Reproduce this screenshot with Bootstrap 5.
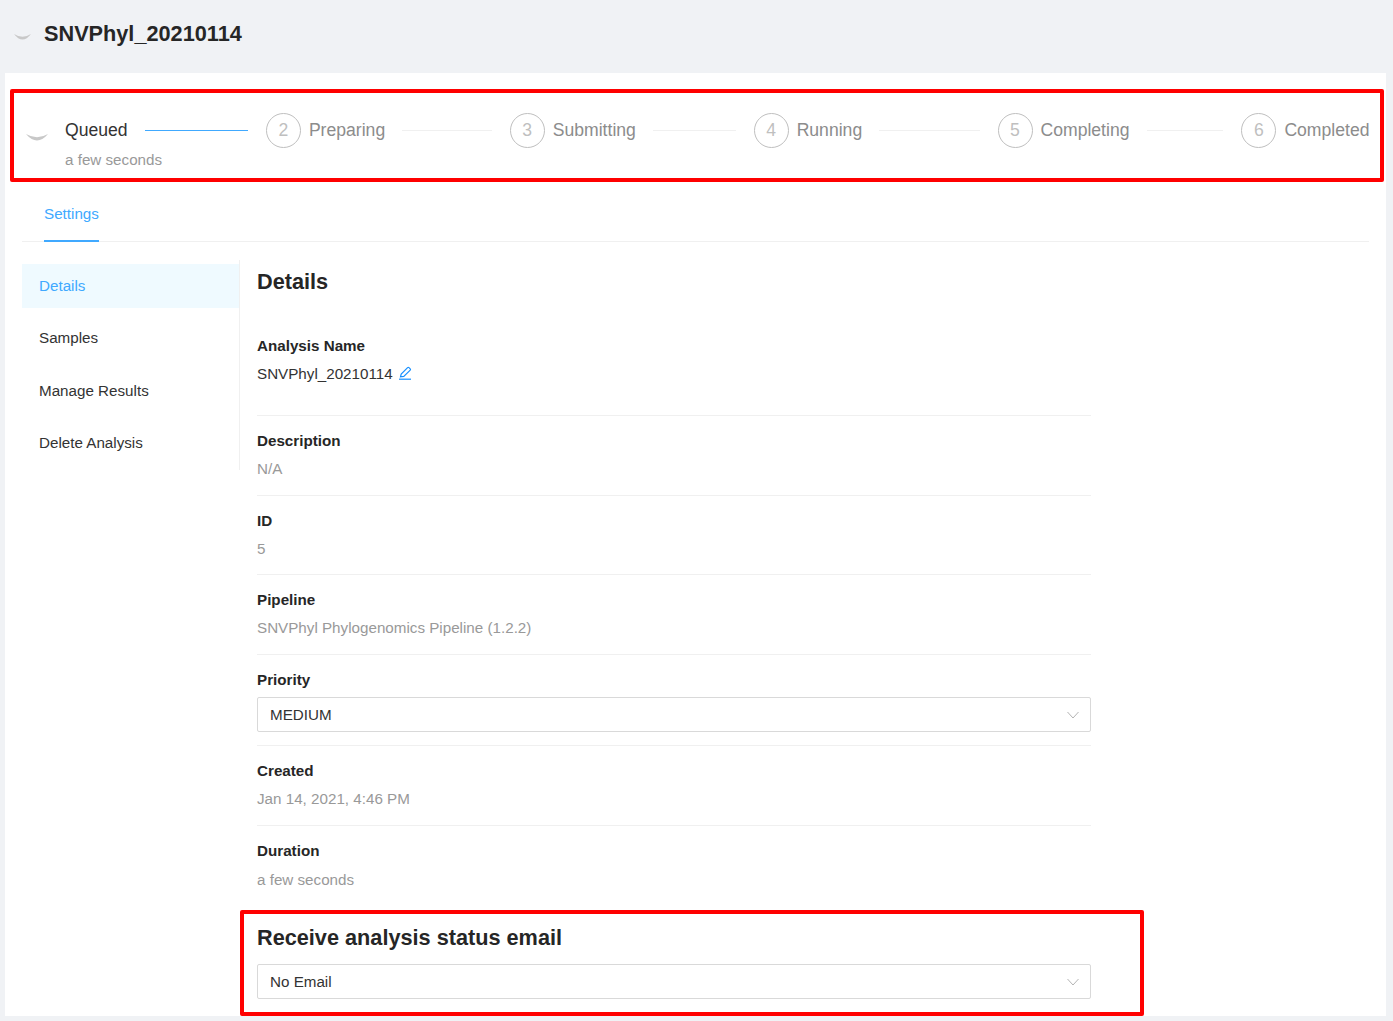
<!DOCTYPE html>
<html lang="en">
<head>
    <meta charset="UTF-8">
    <title>SNVPhyl_20210114</title>
    <link rel="stylesheet" href="https://cdn.jsdelivr.net/npm/bootstrap@5.3.0/dist/css/bootstrap.min.css">
    <style>
        body {
            background: #f0f2f5;
            font-family: "Liberation Sans", Arial, sans-serif;
            font-size: 15.2px;
            color: #262626;
            overflow: hidden;
        }

        .page-head {
            height: 73px;
            padding: 0 0 6px 14px;
        }

        .page-head h1 {
            font-size: 21.7px;
            font-weight: 700;
            margin: 0 0 0 13px;
            line-height: 26px;
        }

        .panel {
            background: #fff;
            margin: 0 7px 5px 5px;
            height: 943px;
            padding-top: 16px;
        }

        .red-box {
            border: 4px solid #f00;
            border-radius: 2px;
        }

        .steps-box {
            margin: 0 2px 0 5px;
            height: 93px;
            padding: 20px 11px 0 8px;
        }

        .step-item {
            flex: 1 1 0;
        }

        .step-item:last-child {
            flex: none;
            width: 127.6px;
        }

        .step-num {
            width: 35px;
            height: 35px;
            border: 1px solid #bfbfbf;
            border-radius: 50%;
            color: #bfbfbf;
            font-size: 17.6px;
            margin-right: 8px;
            flex: none;
        }

        .step-spin {
            width: 35px;
            height: 35px;
            margin-right: 8px;
            padding-left: 4px;
            flex: none;
        }

        .step-title {
            font-size: 17.6px;
            line-height: 35px;
            color: #8c8c8c;
            white-space: nowrap;
        }

        .step-title.now {
            color: #333;
        }

        .step-line {
            height: 1px;
            background: #f0f0f0;
            margin: 0 18px 0 17px;
        }

        .step-line.now {
            background: #40a9ff;
        }

        .step-desc {
            color: #999;
            line-height: 22px;
            margin-top: 1px;
        }

        .tab-bar {
            margin: 0 17px;
            height: 60px;
            border-bottom: 1px solid #f0f0f0;
            padding-left: 22px;
        }

        .tab-on {
            color: #40a9ff;
            border-bottom: 2px solid #40a9ff;
            height: 60px;
            line-height: 63px;
            margin-bottom: -1px;
        }

        .body-wrap {
            margin-top: 18px;
        }

        .side-menu {
            width: 218px;
            height: 210px;
            margin-left: 17px;
            border-right: 1px solid #f0f0f0;
            padding-top: 4px;
        }

        .side-item {
            height: 44px;
            line-height: 44px;
            padding-left: 17px;
            margin-bottom: 8.3px;
            color: #333;
            text-decoration: none;
        }

        .side-item.on {
            background: #effaff;
            color: #40a9ff;
        }

        .main-col h2 {
            font-size: 21.7px;
            font-weight: 700;
            line-height: 26px;
            margin: 9px 0 0;
        }

        .detail-list {
            width: 834px;
            margin-left: 17px;
        }

        .detail-row {
            padding: 14px 0 14.67px;
            border-bottom: 1px solid #f0f0f0;
        }

        .detail-row:last-child {
            border-bottom: 0;
        }

        .detail-row.first {
            padding: 40px 0 30.1px;
        }

        .detail-row.tight {
            padding-bottom: 13px;
        }

        .detail-label {
            font-weight: 700;
            line-height: 22px;
            margin-bottom: 6px;
        }

        .detail-row:last-child .detail-label {
            margin-bottom: 7px;
        }

        .detail-value {
            line-height: 22px;
            color: #999;
        }

        .detail-value.dark {
            color: #333;
        }

        .edit-icon {
            margin-left: 5px;
            vertical-align: -1px;
        }

        .form-select.ant-select {
            height: 35px;
            font-size: 15.2px;
            color: #333;
            border: 1px solid #d9d9d9;
            border-radius: 2px;
            padding: 1px 30px 0 12px;
            background-image: url("data:image/svg+xml,%3csvg xmlns='http://www.w3.org/2000/svg' viewBox='0 0 12 8'%3e%3cpath fill='none' stroke='%23b4b4b4' stroke-width='1' d='M.5 1 6 7 11.5 1'/%3e%3c/svg%3e");
            background-size: 12px 8px;
            background-position: right 11px center;
        }

        .mail-box {
            width: 904px;
            height: 106px;
            margin-top: 5px;
            padding: 0 49px 0 13px;
        }

        .mail-box h2 {
            margin: 11px 0 13px;
        }
    </style>
</head>
<body>
    <div class="page-head d-flex align-items-center">
        <svg width="17" height="8" viewBox="0 0 17 8" class="mt-2 flex-shrink-0"><path d="M0 0Q8.500 11 17 0Q8.500 5.500 0 0Z" fill="#c8c8c8"/></svg>
        <h1>SNVPhyl_20210114</h1>
    </div>

    <div class="panel">
        <div class="red-box steps-box d-flex">
            <div class="step-item d-flex">
                <div class="step-spin d-flex">
                    <svg width="22" height="35" viewBox="0 0 22 35"><path d="M0 21Q11 34 22 21Q11 27.500 0 21Z" fill="#c8c8c8"/></svg>
                </div>
                <div class="flex-grow-1">
                    <div class="d-flex align-items-center">
                        <span class="step-title now">Queued</span>
                        <div class="step-line now flex-grow-1"></div>
                    </div>
                    <div class="step-desc">a few seconds</div>
                </div>
            </div>
            <div class="step-item d-flex">
                <div class="step-num d-flex align-items-center justify-content-center">2</div>
                <div class="flex-grow-1 d-flex align-items-center align-self-start">
                    <span class="step-title">Preparing</span>
                    <div class="step-line flex-grow-1"></div>
                </div>
            </div>
            <div class="step-item d-flex">
                <div class="step-num d-flex align-items-center justify-content-center">3</div>
                <div class="flex-grow-1 d-flex align-items-center align-self-start">
                    <span class="step-title">Submitting</span>
                    <div class="step-line flex-grow-1"></div>
                </div>
            </div>
            <div class="step-item d-flex">
                <div class="step-num d-flex align-items-center justify-content-center">4</div>
                <div class="flex-grow-1 d-flex align-items-center align-self-start">
                    <span class="step-title">Running</span>
                    <div class="step-line flex-grow-1"></div>
                </div>
            </div>
            <div class="step-item d-flex">
                <div class="step-num d-flex align-items-center justify-content-center">5</div>
                <div class="flex-grow-1 d-flex align-items-center align-self-start">
                    <span class="step-title">Completing</span>
                    <div class="step-line flex-grow-1"></div>
                </div>
            </div>
            <div class="step-item d-flex">
                <div class="step-num d-flex align-items-center justify-content-center">6</div>
                <div class="d-flex align-items-center align-self-start">
                    <span class="step-title">Completed</span>
                </div>
            </div>
        </div>

        <div class="tab-bar d-flex">
            <div class="tab-on">Settings</div>
        </div>

        <div class="body-wrap d-flex">
            <div class="side-menu d-flex flex-column flex-shrink-0">
                <a class="side-item on" href="#">Details</a>
                <a class="side-item" href="#">Samples</a>
                <a class="side-item" href="#">Manage Results</a>
                <a class="side-item" href="#">Delete Analysis</a>
            </div>
            <div class="main-col">
                <div class="detail-list">
                    <h2>Details</h2>
                    <div class="detail-row first">
                        <div class="detail-label">Analysis Name</div>
                        <div class="detail-value dark">SNVPhyl_20210114<svg class="edit-icon" width="14" height="14" viewBox="0 0 14 14" fill="none" stroke="#1890ff" stroke-width="1.200"><path d="M1 13.200H13"/><path d="M2.500 10.800 3.200 8 9.600 1.600Q10.300 1 11 1.600L12.200 2.800Q12.800 3.500 12.200 4.200L5.800 10.400Z"/></svg></div>
                    </div>
                    <div class="detail-row">
                        <div class="detail-label">Description</div>
                        <div class="detail-value">N/A</div>
                    </div>
                    <div class="detail-row">
                        <div class="detail-label">ID</div>
                        <div class="detail-value">5</div>
                    </div>
                    <div class="detail-row">
                        <div class="detail-label">Pipeline</div>
                        <div class="detail-value">SNVPhyl Phylogenomics Pipeline (1.2.2)</div>
                    </div>
                    <div class="detail-row tight">
                        <div class="detail-label">Priority</div>
                        <select class="form-select ant-select"><option>MEDIUM</option></select>
                    </div>
                    <div class="detail-row">
                        <div class="detail-label">Created</div>
                        <div class="detail-value">Jan 14, 2021, 4:46 PM</div>
                    </div>
                    <div class="detail-row">
                        <div class="detail-label">Duration</div>
                        <div class="detail-value">a few seconds</div>
                    </div>
                </div>
                <div class="red-box mail-box">
                    <h2>Receive analysis status email</h2>
                    <select class="form-select ant-select"><option>No Email</option></select>
                </div>
            </div>
        </div>
    </div>
    <script src="https://cdn.jsdelivr.net/npm/bootstrap@5.3.0/dist/js/bootstrap.bundle.min.js"></script>
</body>
</html>
